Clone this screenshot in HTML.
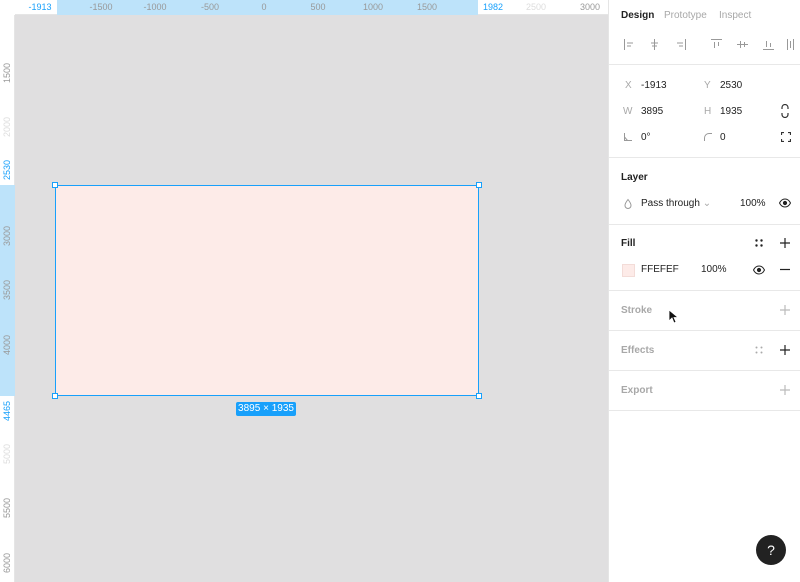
<!DOCTYPE html>
<html><head><meta charset="utf-8"><style>
*{margin:0;padding:0;box-sizing:border-box}
body{width:800px;height:582px;overflow:hidden;background:#e0dfe0;font-family:"Liberation Sans",sans-serif;position:relative}
.abs{position:absolute}
.rt{left:0;top:0;width:608px;height:15px;background:#fff;border-bottom:1px solid #e5e5e5}
.rl{left:0;top:0;width:15px;height:582px;background:#fff;border-right:1px solid #e5e5e5}
.tl{font-size:9px;color:#999;top:2px;transform:translateX(-50%)}
.vl{font-size:9px;color:#999;left:-8px;width:30px;text-align:center;transform:rotate(-90deg)}
.panel{left:608px;top:0;width:192px;height:582px;background:#fff;border-left:1px solid #e5e5e5}
.panel .t{font-size:10px;color:#222;white-space:nowrap}
.panel .g{color:#a8a8a8}
.sep{left:0;width:192px;height:1px;background:#e8e8e8}
.b{font-weight:bold}
</style></head><body>
<div class="abs rt">
<div class="abs" style="left:57px;top:0;width:421px;height:15px;background:#bde3fa"></div>
<div class="abs tl" style="left:40px;color:#18a0fb">-1913</div>
<div class="abs tl" style="left:101px">-1500</div>
<div class="abs tl" style="left:155px">-1000</div>
<div class="abs tl" style="left:210px">-500</div>
<div class="abs tl" style="left:264px">0</div>
<div class="abs tl" style="left:318px">500</div>
<div class="abs tl" style="left:373px">1000</div>
<div class="abs tl" style="left:427px">1500</div>
<div class="abs tl" style="left:493px;color:#18a0fb">1982</div>
<div class="abs tl" style="left:536px;color:#ddd">2500</div>
<div class="abs tl" style="left:590px">3000</div>
</div>
<div class="abs rl">
<div class="abs" style="left:0;top:185px;width:15px;height:211px;background:#bde3fa"></div>
<div class="abs vl" style="top:68px">1500</div>
<div class="abs vl" style="top:122px;color:#ddd">2000</div>
<div class="abs vl" style="top:165px;color:#18a0fb">2530</div>
<div class="abs vl" style="top:231px">3000</div>
<div class="abs vl" style="top:285px">3500</div>
<div class="abs vl" style="top:340px">4000</div>
<div class="abs vl" style="top:406px;color:#18a0fb">4465</div>
<div class="abs vl" style="top:449px;color:#ddd">5000</div>
<div class="abs vl" style="top:503px">5500</div>
<div class="abs vl" style="top:558px">6000</div>
</div>
<div class="abs" style="left:0;top:0;width:15px;height:15px;background:#fff"></div>
<div class="abs" style="left:55px;top:185px;width:424px;height:211px;background:#fdebe8;border:1px solid #18a0fb"></div>
<div class="abs" style="left:52px;top:182px;width:6px;height:6px;background:#fff;border:1px solid #18a0fb"></div>
<div class="abs" style="left:476px;top:182px;width:6px;height:6px;background:#fff;border:1px solid #18a0fb"></div>
<div class="abs" style="left:52px;top:393px;width:6px;height:6px;background:#fff;border:1px solid #18a0fb"></div>
<div class="abs" style="left:476px;top:393px;width:6px;height:6px;background:#fff;border:1px solid #18a0fb"></div>
<div class="abs" style="left:236px;top:402px;width:60px;height:14px;background:#18a0fb;color:#fff;font-size:10px;text-align:center;line-height:14px;border-radius:2px">3895 × 1935</div>

<div class="abs panel">
<div class="abs t b" style="left:12px;top:10px">Design</div>
<div class="abs t g" style="left:55px;top:10px">Prototype</div>
<div class="abs t g" style="left:110px;top:10px">Inspect</div>
<svg class="abs" style="left:10px;top:36px" width="180" height="18" stroke="#999" stroke-width="1" fill="none">
<path d="M5.5 3v11M8 7h6M8 10h4"/>
<path d="M35.5 3v11M32 7h7M33 10h5"/>
<path d="M66.5 3v11M58 7h6M60 10h4"/>
<path d="M92 3.5h11M95.5 6v6M99.5 6v4"/>
<path d="M118 8.5h11M121.5 5v7M125.5 6v5"/>
<path d="M144 13.5h11M147.5 5v6M151.5 7v4"/>
<path d="M168.5 3v11M171.5 5v7M174.5 3v11"/>
</svg>
<div class="abs sep" style="top:64px"></div>
<div class="abs t g" style="left:16px;top:80px">X</div><div class="abs t" style="left:32px;top:80px">-1913</div>
<div class="abs t g" style="left:95px;top:80px">Y</div><div class="abs t" style="left:111px;top:80px">2530</div>
<div class="abs t g" style="left:14px;top:106px">W</div><div class="abs t" style="left:32px;top:106px">3895</div>
<div class="abs t g" style="left:95px;top:106px">H</div><div class="abs t" style="left:111px;top:106px">1935</div>
<svg class="abs" style="left:171px;top:104px" width="10" height="14" stroke="#333" stroke-width="1.2" fill="none"><path d="M2 5V3.5a3 3 0 0 1 6 0V5M2 9v1.5a3 3 0 0 0 6 0V9"/></svg>
<svg class="abs" style="left:14px;top:132px" width="10" height="10" stroke="#999" fill="none"><path d="M1.5 1v7.5H9M1.5 5l3 3.5"/></svg>
<div class="abs t" style="left:32px;top:132px">0°</div>
<svg class="abs" style="left:94px;top:132px" width="10" height="10" stroke="#999" fill="none"><path d="M1.5 9V6a4.5 4.5 0 0 1 4.5-4.5H9"/></svg>
<div class="abs t" style="left:111px;top:132px">0</div>
<svg class="abs" style="left:172px;top:132px" width="10" height="10" stroke="#333" stroke-width="1.2" fill="none"><path d="M.5 3V.5H3M7 .5h2.5V3M9.5 7v2.5H7M3 9.5H.5V7"/></svg>
<div class="abs sep" style="top:157px"></div>
<div class="abs t b" style="left:12px;top:172px">Layer</div>
<svg class="abs" style="left:14px;top:198px" width="10" height="12" stroke="#999" fill="none"><path d="M5 1.5C3 4 2 6 2 7.5a3 3 0 0 0 6 0C8 6 7 4 5 1.5z"/></svg>
<div class="abs t" style="left:32px;top:198px">Pass through <span class="g">⌄</span></div>
<div class="abs t" style="left:131px;top:198px">100%</div>
<svg class="abs" style="left:170px;top:198px" width="12" height="10" stroke="#222" fill="none"><path d="M.5 5C2 2 4 1 6 1s4 1 5.5 4C10 8 8 9 6 9S2 8 .5 5z"/><circle cx="6" cy="5" r="1.6" fill="#222"/></svg>
<div class="abs sep" style="top:224px"></div>
<div class="abs t b" style="left:12px;top:238px">Fill</div>
<svg class="abs" style="left:146px;top:239px" width="8" height="8" fill="#222"><circle cx="1.5" cy="1.5" r="1.2"/><circle cx="6.5" cy="1.5" r="1.2"/><circle cx="1.5" cy="6.5" r="1.2"/><circle cx="6.5" cy="6.5" r="1.2"/></svg>
<svg class="abs" style="left:171px;top:238px" width="10" height="10" stroke="#222" stroke-width="1.2"><path d="M5 0v10M0 5h10"/></svg>
<div class="abs" style="left:13px;top:264px;width:13px;height:13px;background:#fdebe8;border:1px solid #f3dcd8"></div>
<div class="abs t" style="left:32px;top:264px">FFEFEF</div>
<div class="abs t" style="left:92px;top:264px">100%</div>
<svg class="abs" style="left:144px;top:265px" width="12" height="10" stroke="#222" fill="none"><path d="M.5 5C2 2 4 1 6 1s4 1 5.5 4C10 8 8 9 6 9S2 8 .5 5z"/><circle cx="6" cy="5" r="1.6" fill="#222"/></svg>
<svg class="abs" style="left:171px;top:264px" width="10" height="10" stroke="#222" stroke-width="1.2"><path d="M0 5.5h10"/></svg>
<div class="abs sep" style="top:290px"></div>
<div class="abs t b g" style="left:12px;top:305px">Stroke</div>
<svg class="abs" style="left:171px;top:305px" width="10" height="10" stroke="#bbb" stroke-width="1.2"><path d="M5 0v10M0 5h10"/></svg>
<div class="abs sep" style="top:330px"></div>
<div class="abs t b g" style="left:12px;top:345px">Effects</div>
<svg class="abs" style="left:146px;top:346px" width="8" height="8" fill="#aaa"><circle cx="1.5" cy="1.5" r="1"/><circle cx="6.5" cy="1.5" r="1"/><circle cx="1.5" cy="6.5" r="1"/><circle cx="6.5" cy="6.5" r="1"/></svg>
<svg class="abs" style="left:171px;top:345px" width="10" height="10" stroke="#222" stroke-width="1.2"><path d="M5 0v10M0 5h10"/></svg>
<div class="abs sep" style="top:370px"></div>
<div class="abs t b g" style="left:12px;top:385px">Export</div>
<svg class="abs" style="left:171px;top:385px" width="10" height="10" stroke="#bbb" stroke-width="1.2"><path d="M5 0v10M0 5h10"/></svg>
<div class="abs sep" style="top:410px"></div>
<div class="abs" style="left:147px;top:535px;width:30px;height:30px;border-radius:50%;background:#222;color:#fff;font-size:14px;text-align:center;line-height:30px">?</div>
</div>
<svg class="abs" style="left:668px;top:309px" width="10" height="15"><path d="M1 1v11l3-3 2 5 2-1-2-4.5h4z" fill="#111" stroke="#fff" stroke-width=".8"/></svg>
</body></html>
